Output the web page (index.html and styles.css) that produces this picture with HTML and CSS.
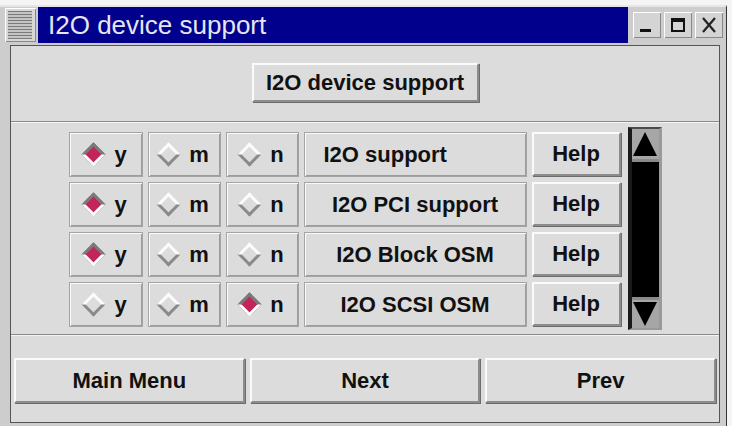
FILE: index.html
```html
<!DOCTYPE html>
<html lang="en">
<head>
    <meta charset="UTF-8">
    <title>I2O device support</title>
    <link rel="stylesheet" href="styles.css">
</head>
<body>

<div class="window">
    <!-- title bar -->
    <div class="titlebar">
        <div class="winmenu"></div>
        <div class="title">I2O device support</div>
        <div class="winbtn">
            <svg width="20" height="20" viewBox="0 0 20 20"><rect x="3" y="14" width="11" height="3" fill="#111"/></svg>
        </div>
        <div class="winbtn">
            <svg width="20" height="20" viewBox="0 0 20 20"><rect x="4" y="4" width="12" height="12" fill="none" stroke="#111" stroke-width="2"/><rect x="4" y="4" width="12" height="3" fill="#111"/></svg>
        </div>
        <div class="winbtn">
            <svg width="20" height="20" viewBox="0 0 20 20"><path d="M4 3 L16 17 M16 3 L4 17" stroke="#222" stroke-width="2.2"/></svg>
        </div>
    </div>

    <div class="client">
        <div class="top">
            <div class="btn heading">I2O device support</div>
        </div>
        <div class="sep"></div>

        <div class="middle">
            <div class="rows">
                <div class="row">
                    <div class="cell"><span class="dia on"></span>y</div>
                    <div class="cell"><span class="dia"></span>m</div>
                    <div class="cell"><span class="dia"></span>n</div>
                    <div class="cell label left">I2O support</div>
                    <div class="btn help">Help</div>
                </div>
                <div class="row">
                    <div class="cell"><span class="dia on"></span>y</div>
                    <div class="cell"><span class="dia"></span>m</div>
                    <div class="cell"><span class="dia"></span>n</div>
                    <div class="cell label">I2O PCI support</div>
                    <div class="btn help">Help</div>
                </div>
                <div class="row">
                    <div class="cell"><span class="dia on"></span>y</div>
                    <div class="cell"><span class="dia"></span>m</div>
                    <div class="cell"><span class="dia"></span>n</div>
                    <div class="cell label">I2O Block OSM</div>
                    <div class="btn help">Help</div>
                </div>
                <div class="row">
                    <div class="cell"><span class="dia"></span>y</div>
                    <div class="cell"><span class="dia"></span>m</div>
                    <div class="cell"><span class="dia on"></span>n</div>
                    <div class="cell label">I2O SCSI OSM</div>
                    <div class="btn help">Help</div>
                </div>
            </div>
            <div class="scrollbar">
                <div class="arrow up"></div>
                <div class="trough"></div>
                <div class="arrow down"></div>
            </div>
        </div>
        <div class="sep"></div>

        <div class="bottom">
            <div class="btn nav">Main Menu</div>
            <div class="btn nav">Next</div>
            <div class="btn nav">Prev</div>
        </div>
    </div>
</div>

</body>
</html>
```

FILE: styles.css
```css
body {
    margin: 0;
    background-color: #f4f4f4;
    font-family: "Liberation Sans", Arial, sans-serif;
    font-weight: bold;
    font-size: 22px;
    color: #111;
}
.window {
    margin-top: 5px;
    width: 727px;
    height: 421px;
    background-color: #cdcdcd;
    border-right: 1px solid #333;
    border-top: 2px solid #e6e6e6;
    box-sizing: border-box;
    display: flex;
    flex-direction: column;
}

/* title bar */
.titlebar {
    display: flex;
    align-items: center;
    height: 36px;
    padding-left: 5px;
}
.winmenu {
    width: 31px;
    height: 34px;
    background-color: #d8d8d8;
    background-image: repeating-linear-gradient(to bottom, #7a7a7a 0, #7a7a7a 1px, #c4c4c4 1px, #c4c4c4 3px);
    background-size: 24px 28px;
    background-position: 3px 3px;
    background-repeat: no-repeat;
    box-shadow: inset 1px 1px 0 #fff, inset -1px -1px 0 #888;
}
.title {
    flex: 1;
    height: 36px;
    margin-left: 2px;
    margin-right: 5px;
    background-color: #00008c;
    color: #e6e6f0;
    font-weight: normal;
    font-size: 26px;
    line-height: 36px;
    padding-left: 10px;
}
.winbtn {
    width: 28px;
    height: 26px;
    margin-right: 3px;
    display: flex;
    align-items: center;
    justify-content: center;
    background-color: #d4d4d4;
    box-shadow: inset 1px 1px 0 #fff, inset -1px -1px 0 #888;
}

/* client area */
.client {
    margin: 2px 6px 3px 10px;
    flex: 1;
    background-color: #dcdcdc;
    border: 1px solid #555;
    display: flex;
    flex-direction: column;
}
.top {
    height: 75px;
    display: flex;
    justify-content: center;
    align-items: flex-start;
    padding-top: 17px;
    box-sizing: border-box;
}
.sep {
    height: 1px;
    background-color: #8a8a8a;
    border-bottom: 1px solid #f4f4f4;
}
.btn {
    display: flex;
    align-items: center;
    justify-content: center;
    box-sizing: border-box;
    background-color: #dcdcdc;
    border-top: 2px solid #fbfbfb;
    border-left: 2px solid #fbfbfb;
    border-bottom: 2px solid #8c8c8c;
    border-right: 2px solid #8c8c8c;
    box-shadow: 1px 1px 0 #6c6c6c;
}
.heading {
    width: 227px;
    height: 39px;
}

.middle {
    height: 211px;
    display: flex;
    justify-content: center;
    padding: 4px 0;
    box-sizing: border-box;
}
.rows {
    margin-top: 5px;
    display: flex;
    flex-direction: column;
    gap: 5px;
}
.row {
    display: grid;
    grid-template-columns: 74px 73px 73px 223px 89px;
    gap: 5px;
    height: 45px;
}
.cell {
    display: flex;
    align-items: center;
    justify-content: center;
    gap: 12px;
    border: 1px solid #a4a4a4;
    box-shadow: inset 1px 1px 0 #fafafa, inset -1px -1px 0 #9c9c9c;
}
.label.left {
    justify-content: flex-start;
    padding-left: 19px;
}
.help {
    height: 44px;
}

/* radio diamonds */
.dia {
    width: 17px;
    height: 17px;
    transform: rotate(45deg);
    box-sizing: border-box;
    background-color: #dcdcdc;
    border-top: 3px solid #fcfcfc;
    border-left: 3px solid #fcfcfc;
    border-bottom: 3px solid #8a8a8a;
    border-right: 3px solid #8a8a8a;
    margin-left: 1px;
}
.dia.on {
    background-color: #c2245c;
    border-top-color: #7a7a7a;
    border-left-color: #7a7a7a;
    border-bottom-color: #fcfcfc;
    border-right-color: #fcfcfc;
}

/* scrollbar */
.scrollbar {
    width: 34px;
    height: 203px;
    margin-left: 7px;
    box-sizing: border-box;
    background-color: #000;
    border-top: 2px solid #4a4a4a;
    border-left: 4px solid #1a1a1a;
    border-right: 3px solid #9a9a9a;
    border-bottom: 2px solid #9a9a9a;
    display: flex;
    flex-direction: column;
}
.arrow {
    height: 30px;
    background-color: #a6a6a6;
    position: relative;
}
.arrow::after {
    content: "";
    position: absolute;
    left: 1px;
    width: 0;
    height: 0;
    border-left: 12px solid transparent;
    border-right: 12px solid transparent;
}
.arrow.up {
    border-bottom: 3px solid #8a8a8a;
}
.arrow.up::after {
    top: 3px;
    border-bottom: 24px solid #000;
}
.arrow.down {
    height: 28px;
    border-top: 3px solid #8a8a8a;
}
.arrow.down::after {
    top: 2px;
    border-top: 24px solid #000;
}
.trough {
    flex: 1;
    background-color: #000;
}

.bottom {
    flex: 1;
    display: flex;
    gap: 5px;
    padding: 22px 3px 0;
    box-sizing: border-box;
}
.nav {
    flex: 1;
    height: 45px;
}
```
